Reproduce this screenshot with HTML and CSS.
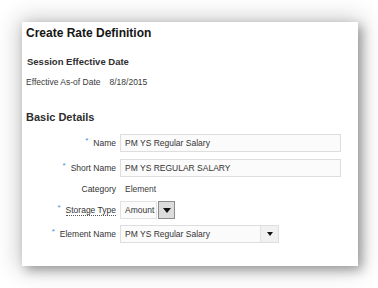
FILE: index.html
```html
<!DOCTYPE html>
<html>
<head>
<meta charset="utf-8">
<link rel="stylesheet" href="styles.css">
</head>
<body>
<div class="stage">
  <div class="card">
    <h1 class="title">Create Rate Definition</h1>
    <h2 class="section">Session Effective Date</h2>
    <div class="effective"><span class="eff-label">Effective As-of Date</span><span class="eff-value">8/18/2015</span></div>
    <h2 class="basic">Basic Details</h2>
    <div class="form">
      <div class="row r-name">
        <div class="label"><span class="req">*</span>Name</div>
        <div class="input wide">PM YS Regular Salary</div>
      </div>
      <div class="row r-short">
        <div class="label"><span class="req">*</span>Short Name</div>
        <div class="input wide">PM YS REGULAR SALARY</div>
      </div>
      <div class="row r-cat">
        <div class="label">Category</div>
        <div class="value">Element</div>
      </div>
      <div class="row r-store">
        <div class="label"><span class="req">*</span><span class="dotted">Storage Type</span></div>
        <div class="choice">
          <div class="choice-text">Amount</div>
          <div class="choice-btn"><span class="tri"></span></div>
        </div>
      </div>
      <div class="row r-elem">
        <div class="label"><span class="req">*</span>Element Name</div>
        <div class="combo">
          <div class="combo-text">PM YS Regular Salary</div>
          <div class="combo-btn"><span class="tri small"></span></div>
        </div>
      </div>
    </div>
  </div>
</div>
</body>
</html>
```
FILE: styles.css
```css
html, body {
  margin: 0;
  padding: 0;
  background: #ffffff;
}
body {
  font-family: "Liberation Sans", Arial, sans-serif;
  color: #333333;
}
.stage {
  padding: 22px 20px 22px 22px;
}
.card {
  width: 336px;
  height: 244px;
  box-sizing: border-box;
  background: #ffffff;
  padding: 4px 4px 0 4px;
  box-shadow: 0 0 22px 3px rgba(0, 0, 0, 0.22), 4px 4px 10px rgba(0, 0, 0, 0.3);
}
.title {
  margin: 0;
  font-size: 12px;
  line-height: 14px;
  font-weight: bold;
  color: #151515;
}
.section {
  margin: 16px 0 0 1px;
  font-size: 9.5px;
  line-height: 12px;
  font-weight: bold;
  color: #2e2e2e;
}
.effective {
  margin-top: 8px;
  font-size: 8.5px;
  line-height: 12px;
  color: #3a3a3a;
  display: flex;
}
.eff-value {
  margin-left: 9px;
}
.basic {
  margin: 22px 0 0 0;
  font-size: 11px;
  line-height: 14px;
  font-weight: bold;
  color: #2e2e2e;
}
.form {
  margin-top: 10px;
  display: flex;
  flex-direction: column;
  font-size: 8.5px;
}
.row {
  display: flex;
  align-items: center;
}
.r-name { margin-bottom: 7px; }
.r-short { margin-bottom: 2px; }
.r-cat { height: 20px; margin-bottom: 2px; }
.r-store { margin-bottom: 6px; }
.label {
  width: 90px;
  margin-right: 4px;
  text-align: right;
  color: #333333;
  line-height: 12px;
}
.req {
  color: #3a8fd6;
  font-size: 8px;
  position: relative;
  top: -3px;
  margin-right: 5px;
}
.dotted {
  border-bottom: 1px dotted #555555;
}
.input {
  height: 18px;
  box-sizing: border-box;
  border: 1px solid #dedede;
  background: #fbfbfb;
  padding: 0 4px;
  line-height: 16px;
  color: #333333;
}
.wide {
  width: 221px;
}
.value {
  padding-left: 5px;
  color: #3a3a3a;
}
.choice {
  display: flex;
  align-items: center;
  height: 18px;
}
.choice-text {
  width: 37px;
  height: 18px;
  box-sizing: border-box;
  border: 1px solid #e2e2e2;
  background: #fbfbfb;
  padding: 0 4px;
  line-height: 16px;
}
.choice-btn {
  margin-left: 1px;
  width: 17px;
  height: 18px;
  box-sizing: border-box;
  border: 1px solid #8c8c8c;
  background: #dcdcdc;
  display: flex;
  align-items: center;
  justify-content: center;
}
.tri {
  width: 0;
  height: 0;
  border-left: 4px solid transparent;
  border-right: 4px solid transparent;
  border-top: 5px solid #111111;
}
.tri.small {
  border-left-width: 3px;
  border-right-width: 3px;
  border-top-width: 4px;
}
.combo {
  display: flex;
  width: 159px;
  height: 18px;
  box-sizing: border-box;
  border: 1px solid #dedede;
  background: #fbfbfb;
}
.combo-text {
  flex: 1;
  padding: 0 4px;
  line-height: 16px;
}
.combo-btn {
  width: 17px;
  border-left: 1px solid #e2e2e2;
  background: #f1f1f1;
  display: flex;
  align-items: center;
  justify-content: center;
}
```
